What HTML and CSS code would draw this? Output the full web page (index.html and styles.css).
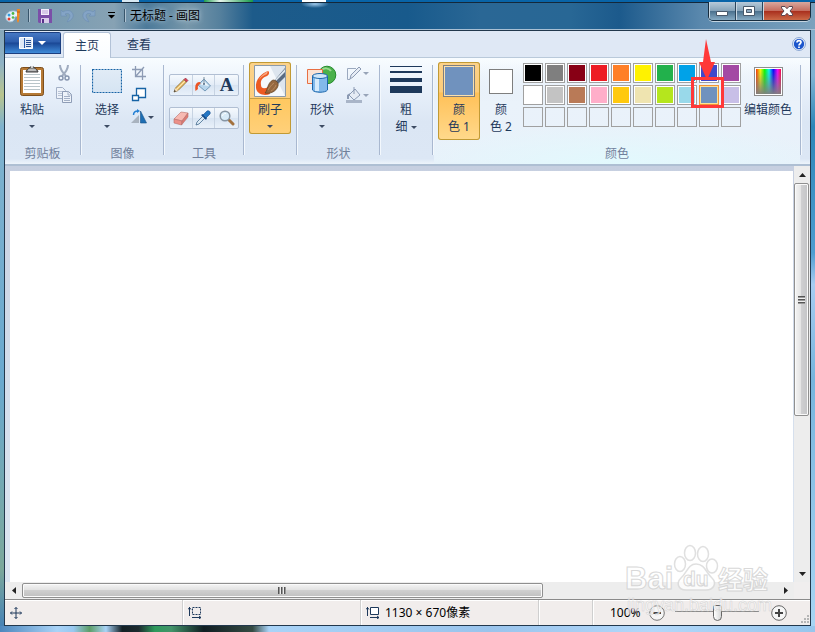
FILE: index.html
```html
<!DOCTYPE html>
<html lang="zh-CN">
<head>
<meta charset="utf-8">
<title>无标题 - 画图</title>
<link rel="stylesheet" href="styles.css">
</head>
<body>
<header class="titlebar">
  <svg class="app-icon" width="16" height="16" viewBox="0 0 16 16"><path d="M1 10C0 6 4 3 8 3c4 0 6 2 5 5-1 1-2 0-3 1s0 3-2 4c-3 2-7 0-7-3z" fill="#e8f2fa" stroke="#a9c8de"/><circle cx="4" cy="7" r="1.500" fill="#2e9be0"/><circle cx="8" cy="5.500" r="1.400" fill="#4cb748"/><circle cx="4" cy="11" r="1.500" fill="#e23b2e"/><circle cx="8" cy="9.500" r="1.300" fill="#57b947"/><path d="M12 1h3l-1 12-1 2-1-2z" fill="#f08a24"/><path d="M12 4h3" stroke="#b85c10"/></svg>
  <span class="divider"></span>
  <button class="quick" aria-label="保存"><svg width="14" height="14" viewBox="0 0 14 14"><path d="M0 0h14v14H1L0 13z" fill="#7b4fa8"/><path d="M3 0h8v6H3z" fill="#f3eefb"/><path d="M4 2h6M4 4h6" stroke="#b9a3d6"/><path d="M3 9h8v5H3z" fill="#d9cdea"/><path d="M4 10h2v4H4z" fill="#57318a"/></svg></button>
  <button class="quick" aria-label="撤消"><svg width="14" height="14" viewBox="0 0 14 14"><path d="M1 1v6h6L5 5c3-1.500 6 0 4.500 3.500L7 13c6-2 7.500-6.500 5-9.500C10 1 6 1 3 3z" fill="#84a4c6" stroke="#6b8db4" stroke-width=".6"/></svg></button>
  <button class="quick" aria-label="重做"><svg width="14" height="14" viewBox="0 0 14 14"><path d="M13 1v6H7l2-2C6 3.500 3 5 4.500 8.500L7 13C1 11-.5 6.500 2 3.500 4 1 8 1 11 3z" fill="#84a4c6" stroke="#6b8db4" stroke-width=".6"/></svg></button>
  <button class="quick more" aria-label="自定义快速访问工具栏"><svg width="9" height="7" viewBox="0 0 9 7"><path d="M1 0h7v1H1zM1 3h7L4.500 6.500z" fill="#000"/></svg></button>
  <span class="divider"></span>
  <h1 class="title">无标题 - 画图</h1>
  <div class="window-buttons">
    <button class="win" aria-label="最小化"><svg width="14" height="12" viewBox="0 0 14 12"><path d="M1.500 6.500h11v4h-11z" fill="#fff" stroke="#49596b"/></svg></button>
    <button class="win" aria-label="最大化"><svg width="14" height="12" viewBox="0 0 14 12"><path d="M1.500 1.500h11v9h-11z" fill="#fff" stroke="#49596b"/><path d="M4.500 4.500h5v3h-5z" fill="#8ea9c0" stroke="#49596b"/></svg></button>
    <button class="win close" aria-label="关闭"><svg width="14" height="12" viewBox="0 0 14 12"><path d="M1.500 1.500h3.500l2 2.200 2-2.200h3.500v1.500L10 6l2.500 3v1.500H9l-2-2.200-2 2.200H1.500V9L4 6 1.500 3z" fill="#fff" stroke="#5a4650"/></svg></button>
  </div>
</header>
<main class="window">
  <nav class="tabs">
    <button class="file" aria-label="画图菜单"><svg width="28" height="12" viewBox="0 0 28 12"><path d="M.5.500h13v11H.500z" fill="#dfe9f7" stroke="#fff"/><path d="M5.500 1v10" stroke="#2b5ba8"/><path d="M7 3.500h5M7 5.500h5M7 7.500h5M7 9.500h5" stroke="#264f94"/><path d="M19 4h8l-4 4z" fill="#fff"/></svg></button>
    <button class="tab active">主页</button>
    <button class="tab">查看</button>
    <button class="help" aria-label="帮助"><svg width="14" height="14" viewBox="0 0 14 14"><circle cx="7" cy="7" r="6.400" fill="#fff" stroke="#7f9fd0"/><circle cx="7" cy="7" r="5.200" fill="#1c56cc"/><path d="M5 5.500C5 3 9 3 9 5.300 9 6.800 7 6.700 7 8.500M7 9.600v1.500" fill="none" stroke="#fff" stroke-width="1.700"/></svg></button>
  </nav>
  <div class="ribbon">
    <section class="group clip">
      <div class="tools">
        <button class="big"><span class="pic"><svg width="30" height="32" viewBox="0 0 30 32"><rect x="3.500" y="2.500" width="23" height="28" rx="2" fill="#b67a35" stroke="#7e4f1c"/><path d="M6 5h18v23H6z" fill="#fff"/><path d="M7 9.500h16M7 12.500h16M7 15.500h16M7 18.500h16M7 21.500h16M7 24.500h16" stroke="#b9c5c9"/><path d="M9 7c0-3 3-2 4-5h4c1 3 4 2 4 5z" fill="#888" stroke="#3f3f3f"/><path d="M11 5h8" stroke="#eee"/><circle cx="15" cy="2" r="1" fill="#eee"/></svg></span><span>粘贴</span><i class="caret"></i></button>
        <div class="small-col">
          <button class="small" aria-label="剪切"><svg width="16" height="16" viewBox="0 0 16 16"><path d="M4 0c0 4 2 7 6 11M12 0c0 4-2 7-6 11" fill="none" stroke="#a0acbf" stroke-width="2"/><circle cx="5" cy="13" r="2" fill="none" stroke="#8594ae" stroke-width="1.400"/><circle cx="11" cy="13" r="2" fill="none" stroke="#8594ae" stroke-width="1.400"/></svg></button>
          <button class="small" aria-label="复制"><svg width="16" height="16" viewBox="0 0 16 16"><path d="M.5.500h6l3 3v8h-9z" fill="#eef3fa" stroke="#a3b0c6"/><path d="M2 4.500h5M2 6.500h5M2 8.500h5" stroke="#b9c4d6"/><path d="M6.500 4.500h6l3 3v8h-9z" fill="#eef3fa" stroke="#8f9db6"/><path d="M12 4v4h4M8 9.500h6M8 11.500h6M8 13.500h6" fill="none" stroke="#a3b0c6"/></svg></button>
        </div>
      </div>
      <h2>剪贴板</h2>
    </section>
    <i class="sep"></i>
    <section class="group image">
      <div class="tools">
        <button class="big"><span class="pic"><svg width="30" height="26" viewBox="0 0 30 26"><path d="M.5 1.500h29v23H.500z" fill="#1763a514" stroke="#1763a5" stroke-width="1.200" stroke-dasharray="2 1"/></svg></span><span>选择</span><i class="caret"></i></button>
        <div class="small-col">
          <button class="small" aria-label="裁剪"><svg width="16" height="16" viewBox="0 0 16 16"><path d="M4.500 1v10.500H15M1 4.500h10.500V15M5 11l8-9" fill="none" stroke="#8d9bb4" stroke-width="1.300"/></svg></button>
          <button class="small" aria-label="重新调整大小"><svg width="16" height="16" viewBox="0 0 16 16"><path d="M5.500 1.500h9v9h-9z" fill="#fff" stroke="#1763a5" stroke-width="1.300"/><path d="M1.500 8.500h6v5h-6z" fill="#fff" stroke="#1763a5" stroke-width="1.300"/></svg></button>
          <button class="small wide" aria-label="旋转"><svg width="16" height="16" viewBox="0 0 16 16"><path d="M8 6v8H0z" fill="#a9b3bf"/><path d="M9.500 2v12h6z" fill="#1e6eb3" stroke="#145188" stroke-width=".6"/><path d="M2.500 6c0-3 1.500-4 4.500-4" fill="none" stroke="#2480d4" stroke-width="1.500"/><path d="M6 0l3 2-3 2z" fill="#2480d4"/></svg><i class="caret"></i></button>
        </div>
      </div>
      <h2>图像</h2>
    </section>
    <i class="sep"></i>
    <section class="group kit">
      <div class="tools">
        <div class="strip">
          <button aria-label="铅笔"><svg width="16" height="16" viewBox="0 0 16 16"><path d="M1 15l1.500-4 8.500-8.500 2.500 2.500L5 13.500z" fill="#f2c870" stroke="#7c5a20" stroke-width=".8"/><path d="M4 12l8-8" stroke="#fbe6b4"/><path d="M1 15l1.500-4L5 13.500z" fill="#f5dfbd"/><path d="M1 15l.6-2L3 14.300z" fill="#222"/><path d="M11 2.500L12.500 1 15 3.500 13.500 5z" fill="#d9435a" stroke="#8c2c3a" stroke-width=".6"/></svg></button>
          <button aria-label="用颜色填充"><svg width="16" height="16" viewBox="0 0 16 16"><path d="M3 8l6-6 6.500 7L10 14z" fill="#b7d5ec" stroke="#5f89a9" stroke-width=".8"/><path d="M5.500 7.500L9 4l5 5z" fill="#eff7fc"/><path d="M9 0v7" stroke="#7c8f9f"/><circle cx="9" cy="7" r="1" fill="#58718a"/><path d="M5 5C1 5-.5 8 .5 14l2.500-2c-.5-3 0-4 2.500-5z" fill="#ec5423"/></svg></button>
          <button class="letter" aria-label="文本">A</button>
        </div>
        <div class="strip">
          <button aria-label="橡皮擦"><svg width="16" height="16" viewBox="0 0 16 16"><path d="M1 9l7-7 7 1-6 8z" fill="#f7b9b2" stroke="#b9716c" stroke-width=".6"/><path d="M1 9l8 2-.5 4L1 13z" fill="#ec9088" stroke="#b9716c" stroke-width=".6"/><path d="M9 11l6-8v4l-6.500 8z" fill="#dc7a73" stroke="#b9716c" stroke-width=".6"/></svg></button>
          <button aria-label="颜色选取器"><svg width="16" height="16" viewBox="0 0 16 16"><path d="M1 15l1-3 6-6 2 2-6 6z" fill="#dceaf5" stroke="#456c8f" stroke-width=".8"/><path d="M6 5l2-1 4 4-1 2z" fill="#174d8c"/><path d="M8 5l4-4c2-1 4 1 3 3l-4 4z" fill="#2577c4" stroke="#174d8c" stroke-width=".6"/></svg></button>
          <button aria-label="放大镜"><svg width="16" height="16" viewBox="0 0 16 16"><path d="M10 10l4 4" stroke="#a3713d" stroke-width="3" stroke-linecap="round"/><circle cx="6" cy="6" r="4.800" fill="#d8ebf8" stroke="#8795a3" stroke-width="1.500"/><path d="M3.500 6C4 4 5 3.500 7 3.500" fill="none" stroke="#fff"/></svg></button>
        </div>
      </div>
      <h2>工具</h2>
    </section>
    <i class="sep"></i>
    <section class="group brush">
      <div class="tools">
        <button class="big on split"><span class="pic"><svg width="32" height="32" viewBox="0 0 32 32"><path d="M.5.500h31v31H.500z" fill="#f5f8fb" stroke="#8c9aa8"/><path d="M31 31L16 1h15z" fill="#dde5ee"/><path d="M31 3L20 16l4 3 7-7z" fill="#5b6c82"/><path d="M31 4L21 15l1 1 9-9z" fill="#dfe8f0"/><path d="M14 6C8 8 1 14 2 23c1 7 9 8 14 6l-2-7c-3 2-7 2-7-2C6 14 10 12 13 11c2-1 3-4 1-5z" fill="#ec5a22"/><path d="M14 6c-3 2-7 4-9 9 3-4 6-5 8-6z" fill="#f8a57f"/><path d="M11 28c3-3 2-10 8-13 3 0 6 3 5 6-2 6-8 8-13 7z" fill="#96683f" stroke="#60401f" stroke-width=".7"/><path d="M14 25c2-3 3-5 6-7M17 26c2-1 4-3 5-6" fill="none" stroke="#c09469" stroke-width=".8"/></svg></span><span>刷子</span><i class="caret"></i></button>
      </div>
    </section>
    <i class="sep"></i>
    <section class="group shapes">
      <div class="tools">
        <button class="big"><span class="pic"><svg width="32" height="32" viewBox="0 0 32 32"><circle cx="21" cy="10" r="8.800" fill="#4bb14b" stroke="#258a2d"/><path d="M15 6c3-4 8-3 10 0" fill="none" stroke="#9ad88e" stroke-width="2"/><path d="M1.500 4.500h15v14h-15z" fill="#fbe3d5" stroke="#e86f43"/><path d="M6.500 11v14c2 3 13 3 15 0V11z" fill="#83b9ea" stroke="#1c67ac"/><path d="M9 12h4v14H9z" fill="#d6ebfc"/><ellipse cx="14" cy="11" rx="7.500" ry="2.500" fill="#cfe6f9" stroke="#1c67ac"/></svg></span><span>形状</span><i class="caret"></i></button>
        <div class="small-col">
          <button class="small wide" aria-label="形状轮廓"><svg width="16" height="16" viewBox="0 0 16 16"><path d="M10 3.500H1.500v11H4" fill="none" stroke="#9ba9bf"/><path d="M4 14l1-4 8-8 2 2-8 8z" fill="#e6ecf5" stroke="#8b9ab3"/></svg><i class="caret dim"></i></button>
          <button class="small wide" aria-label="形状填充"><svg width="16" height="16" viewBox="0 0 16 16"><path d="M0 13h16v3H0z" fill="#a9b5c8"/><path d="M3 8l6-6 5 6-6 5z" fill="#e6ecf5" stroke="#8b9ab3"/><path d="M8 0v7" stroke="#8b9ab3"/><path d="M4 6L1 8v4h2V9z" fill="#8b9ab3"/></svg><i class="caret dim"></i></button>
        </div>
      </div>
      <h2>形状</h2>
    </section>
    <i class="sep"></i>
    <section class="group size">
      <div class="tools">
        <button class="big"><span class="pic"><svg width="32" height="32" viewBox="0 0 32 32"><path d="M0 1h32v1H0zM0 6h32v2H0zM0 13h32v4H0zM0 21h32v7H0z" fill="#1e395b"/></svg></span><span>粗<br>细 <i class="caret"></i></span></button>
      </div>
    </section>
    <i class="sep"></i>
    <section class="group colors">
      <div class="tools">
        <button class="big on"><span class="pic"><i class="current first"></i></span><span>颜<br>色 1</span></button>
        <button class="big"><span class="pic"><i class="current second"></i></span><span>颜<br>色 2</span></button>
        <div class="palette">
          <button class="swatch black" aria-label="黑色"></button>
          <button class="swatch gray" aria-label="灰色"></button>
          <button class="swatch darkred" aria-label="深红色"></button>
          <button class="swatch red" aria-label="红色"></button>
          <button class="swatch orange" aria-label="橙色"></button>
          <button class="swatch yellow" aria-label="黄色"></button>
          <button class="swatch green" aria-label="绿色"></button>
          <button class="swatch turquoise" aria-label="青绿色"></button>
          <button class="swatch indigo" aria-label="靛蓝色"></button>
          <button class="swatch purple" aria-label="紫色"></button>
          <button class="swatch white" aria-label="白色"></button>
          <button class="swatch silver" aria-label="浅灰色"></button>
          <button class="swatch brown" aria-label="褐色"></button>
          <button class="swatch rose" aria-label="玫瑰色"></button>
          <button class="swatch gold" aria-label="金色"></button>
          <button class="swatch tan" aria-label="浅黄色"></button>
          <button class="swatch lime" aria-label="酸橙色"></button>
          <button class="swatch aqua" aria-label="淡青绿色"></button>
          <div class="marked">
            <button class="swatch bluegray selected" aria-label="蓝灰色"></button>
            <svg class="pointer" width="33" height="69" viewBox="0 0 33 69"><path d="M15 0l5 23h4l-8 18L8 23h4z" fill="#ff3838"/><path d="M1.500 39.500h30v28h-30z" fill="none" stroke="#ff3838" stroke-width="3"/></svg>
          </div>
          <button class="swatch lavender" aria-label="淡紫色"></button>
          <button class="swatch" aria-label="自定义 1"></button>
          <button class="swatch" aria-label="自定义 2"></button>
          <button class="swatch" aria-label="自定义 3"></button>
          <button class="swatch" aria-label="自定义 4"></button>
          <button class="swatch" aria-label="自定义 5"></button>
          <button class="swatch" aria-label="自定义 6"></button>
          <button class="swatch" aria-label="自定义 7"></button>
          <button class="swatch" aria-label="自定义 8"></button>
          <button class="swatch" aria-label="自定义 9"></button>
          <button class="swatch" aria-label="自定义 10"></button>
        </div>
        <button class="big edit"><span class="pic"><i class="spectrum"></i></span><span>编辑颜色</span></button>
      </div>
      <h2>颜色</h2>
    </section>
    <i class="sep"></i>
  </div>
  <div class="workspace">
    <div class="desk"><div class="canvas"></div></div>
    <div class="scroll vertical">
      <button class="arrow" aria-label="向上滚动"><svg width="7" height="4" viewBox="0 0 7 4"><path d="M0 4h7L3.500 0z" fill="#222"/></svg></button>
      <div class="track"><div class="thumb"><i class="grip"></i></div></div>
      <button class="arrow" aria-label="向下滚动"><svg width="7" height="4" viewBox="0 0 7 4"><path d="M0 0h7L3.500 4z" fill="#222"/></svg></button>
    </div>
    <div class="scroll horizontal">
      <button class="arrow" aria-label="向左滚动"><svg width="4" height="7" viewBox="0 0 4 7"><path d="M4 0v7L0 3.500z" fill="#222"/></svg></button>
      <div class="track"><div class="thumb"><i class="grip"></i></div></div>
      <button class="arrow" aria-label="向右滚动"><svg width="4" height="7" viewBox="0 0 4 7"><path d="M0 0v7l4-3.500z" fill="#222"/></svg></button>
    </div>
    <div class="corner"></div>
  </div>
  <footer class="status">
    <div class="cell"><svg width="12" height="12" viewBox="0 0 12 12"><path d="M6 .5v11M.5 6h11M4.500 2L6 .5 7.500 2M4.500 10L6 11.500 7.500 10M2 4.500L.5 6 2 7.500M10 4.500L11.500 6 10 7.500" fill="none" stroke="#1e395b"/></svg></div>
    <div class="cell"><svg width="14" height="12" viewBox="0 0 14 12"><path d="M1.500 0v9M0 2.500L1.500.5 3 2.500M4 10.500h9M11 9l2 1.500-2 1.500" fill="none" stroke="#1e395b"/><path d="M4.500.500h8v7h-8z" fill="none" stroke="#1e395b" stroke-dasharray="2 1"/></svg></div>
    <div class="cell"><svg width="14" height="12" viewBox="0 0 14 12"><path d="M1.500 0v9M0 2.500L1.500.5 3 2.500M4 10.500h9M11 9l2 1.500-2 1.500" fill="none" stroke="#1e395b"/><path d="M4.500.500h8v7h-8z" fill="#fff" stroke="#1e395b"/></svg><span>1130 × 670像素</span></div>
    <div class="cell short"></div>
    <div class="zoom">
      <label for="zoom">100%</label>
      <button class="round" aria-label="缩小"><svg width="16" height="16" viewBox="0 0 16 16"><circle cx="8" cy="8" r="7.300" fill="#f6f6f6" stroke="#777"/><path d="M4 7h8v2H4z" fill="#444"/></svg></button>
      <input id="zoom" type="range" min="0" max="100" value="50">
      <button class="round" aria-label="放大"><svg width="16" height="16" viewBox="0 0 16 16"><circle cx="8" cy="8" r="7.300" fill="#f6f6f6" stroke="#666"/><path d="M4 7h3V4h2v3h3v2H9v3H7V9H4z" fill="#444"/></svg></button>
      <svg class="resize" width="9" height="9" viewBox="0 0 9 9"><path d="M7 1h2v2H7zM4 4h2v2H4zM7 4h2v2H7zM1 7h2v2H1zM4 7h2v2H4zM7 7h2v2H7z" fill="#b5b5b5"/></svg>
    </div>
  </footer>
</main>
<svg class="watermark" width="150" height="72" viewBox="0 0 150 72">
  <g fill="#fff" stroke="#d9d9d9" stroke-width="1.500">
    <ellipse cx="54" cy="20" rx="5.500" ry="7.500"/><ellipse cx="64" cy="9" rx="5.500" ry="7.500"/><ellipse cx="77" cy="10" rx="5.500" ry="7.500"/><ellipse cx="86" cy="22" rx="5.500" ry="7"/>
    <path d="M70 20c9 0 10 9 16 14 5 5 2 12-6 12H60c-8 0-10-7-5-12 6-5 7-14 15-14z"/>
  </g>
  <g class="mark">
    <text x="-1" y="45" font-size="31">Bai</text>
    <text x="57" y="42" font-size="21">du</text>
    <text x="92" y="45" font-size="25">经验</text>
    <text class="site" x="1" y="67" font-size="18">jingyan.baidu.com</text>
  </g>
</svg>
</body>
</html>
```
FILE: styles.css
```css
* { box-sizing: border-box; }
body {
  margin: 0;
  height: 100vh;
  padding: 0 4px 6px;
  display: flex;
  flex-direction: column;
  position: relative;
  font: 12px/17px "Noto Sans", "Noto Sans CJK SC", sans-serif;
  color: #1e395b;
  background:
    linear-gradient(90deg, #4d87bd 0, #a9d3f7 7%, #98c8f0 9%, #5d9e68 11%, #a9d3f7 13%, #132025 15%, #1d2a2e 17%, #2e9a5c 19%, #43946a 21%, #101d22 25%, #354b43 31%, #a9d3f7 33%, #9ac4ec 60%, #b2d8fa 80%, #97c6ec) bottom / 100% 6px no-repeat,
    linear-gradient(#86aac4 0, #7fb3d3 12%, #2d86b8 20%, #4e9dd0 40%, #a7cdf2 45%, #76b5dd 60%, #a9d6f4 100%) right / 4px 100% no-repeat,
    linear-gradient(#7e9cae 0, #8fb3c6 10%, #b9c58e 15%, #7fb2ce 20%, #6aa9cf 60%, #7ca89b 90%, #427fb8 100%) left / 4px 100% no-repeat;
}
button { margin: 0; padding: 0; border: 0; background: none; font: inherit; color: inherit; }
button, svg { flex: none; }
svg { display: block; }
h1, h2 { margin: 0; font: inherit; }

.titlebar {
  height: 30px;
  flex: none;
  margin: 0 -4px;
  padding: 2px 4px 0;
  display: flex;
  align-items: center;
  border-bottom: 1px solid #a9c0d4;
  background:
    linear-gradient(90deg, #0864a8 15%, #d8e9f3 15%, #d8e9f3 17%, #0864a8 17%, #0864a8 25%, #1a9b4b 25%, #e8f5ed 27%, #1a9b4b 31%, #0864a8 31%, #0864a8 37%, #fff 37%, #fff 40%, #0864a8 40%) top / 100% 2px no-repeat,
    linear-gradient(#14283a, #14283a) 0 2px / 100% 1px no-repeat,
    radial-gradient(14px 4px at 315px 4px, #9cc6e8, #8bb8dc00),
    linear-gradient(90deg, #7895a8 0, #7c9db2 8%, #87a2b4 14%, #4c7a9a 18%, #7797aa 23%, #55809d 27%, #1d5b8a 31%, #185a8c 50%, #2a6795 59%, #286795 70%, #1c5a8c 76%, #5a88ad 86%, #7aa1bd);
}
.app-icon { margin-left: 1px; }
.divider { width: 2px; height: 13px; margin-left: 7px; border-left: 1px solid #38556b; border-right: 1px solid #b0c4d3; }
.quick { width: 14px; margin-left: 8px; }
.more { display: flex; justify-content: center; }
.titlebar .more + .divider { margin-left: 6px; }
.title { margin-left: 4px; color: #000; text-shadow: 0 0 5px #dce9f2; }
.window-buttons { margin: 0 0 0 auto; align-self: flex-start; display: flex; height: 19px; border: 1px solid #172c3e; border-top: 0; border-radius: 0 0 5px 5px; overflow: hidden; box-shadow: 0 1px #c3d4e0; }
.win { width: 27px; display: flex; align-items: center; justify-content: center; border-right: 1px solid #2d465b; background: linear-gradient(#b7cad9, #87a4ba 48%, #496f8c 50%, #87abc4); box-shadow: inset 1px 0 #cad8e3; }
.close { width: 47px; border: 0; background: linear-gradient(#d9a89e, #c56e60 48%, #a82e1d 50%, #cb6947); }

.window { flex: 1; min-height: 0; display: flex; flex-direction: column; border: 1px solid #22384d; }
.tabs { height: 27px; flex: none; display: flex; align-items: flex-end; background: #dfe8f5; border-bottom: 1px solid #b9c9da; }
.file { width: 56px; height: 22px; align-self: flex-start; margin-top: 1px; display: flex; align-items: center; justify-content: center; border: 1px solid #1c3f80; border-left: 0; border-radius: 0 2px 0 0; background: linear-gradient(#4779c4, #2c5cab 45%, #1a4795 50%, #3f8bd9); }
.tab { width: 48px; height: 25px; margin-left: 4px; }
.file + .tab { margin-left: 2px; }
.active { margin-bottom: -1px; height: 26px; border: 1px solid #b3c2d7; border-bottom: 0; border-radius: 3px 3px 0 0; background: linear-gradient(#fff, #f9fcff); }
.help { margin: 0 4px 6px auto; }

.ribbon { height: 108px; flex: none; display: flex; padding-top: 4px; border-bottom: 2px solid #aebfd3; background: linear-gradient(#f8fcff 0, #e8f0fa 30%, #dbe6f4 60%, #dce7f5 95%, #edf4fb 100%); }
.group { display: flex; flex-direction: column; align-items: center; padding-bottom: 2px; flex: none; }
.group h2 { margin-top: auto; color: #70809b; }
.sep { flex: none; width: 2px; margin: 3px 0 9px; border-left: 1px solid #a9b8d0; border-right: 1px solid #f3f8fd; }
.tools { align-self: stretch; display: flex; align-items: flex-start; }
.clip { width: 75px; }
.clip .tools { padding-left: 6px; }
.image { width: 81px; }
.image .tools { padding-left: 4px; }
.kit { width: 78px; }
.kit .tools { flex-direction: column; align-items: center; padding-top: 12px; gap: 11px; }
.brush { width: 51px; }
.brush .tools { padding-left: 4px; }
.size { width: 51px; }
.size .tools { padding-left: 4px; }
.shapes { width: 81px; }
.shapes .tools { padding-left: 3px; }
.colors { width: 366px; background: radial-gradient(ellipse 60% 40% at 50% 100%, #e2f9fd, #e6f4fb00), linear-gradient(#f8fcff00, #eaf2fa 40%, #e8f1fa); }
.colors .tools { padding-left: 4px; }

.big { width: 42px; padding: 3px 0 5px; display: flex; flex-direction: column; align-items: center; border-radius: 3px; }
.pic { width: 32px; height: 32px; margin-bottom: 4px; display: flex; align-items: center; justify-content: center; }
.caret { display: inline-block; border: 3px solid transparent; border-top-color: #3d4b63; border-bottom: 0; }
.big > .caret { margin: 7px 0 6px; }
.big span > .caret { vertical-align: 2px; }
.caret.dim { border-top-color: #97a4b8; }
.on { background: linear-gradient(#fbd28a, #fdcd7a 38%, #ffc158 40%, #ffd98c); box-shadow: inset 0 0 0 1px #c19a35; }
.split { padding-bottom: 0; background: linear-gradient(#fbd28a, #fdcf80 36px, #c8a045 36px, #c8a045 37px, #ffc860 37px, #ffd07a); }
.small-col { display: flex; flex-direction: column; gap: 6px; padding: 3px 0 0 3px; }
.small { width: 16px; height: 16px; }
.wide { width: 24px; display: flex; align-items: center; gap: 1px; }
.strip { width: 70px; height: 22px; display: grid; grid-template-columns: repeat(3, 1fr); border: 1px solid #b1bfd3; border-radius: 2px; background: linear-gradient(#f5f9fd, #e3ecf7 50%, #d8e4f2 52%, #e9f1fa); }
.strip button { display: flex; align-items: center; justify-content: center; border-right: 1px solid #c7d3e2; }
.strip button:last-child { border-right: 0; }
.strip .letter { font: bold 19px/20px "Liberation Serif", serif; }

.current { width: 32px; height: 32px; border: 1px solid #7e7e7e; }
.first { background: #7092be; box-shadow: inset 0 0 0 1px #fbe0ae; }
.second { width: 24px; height: 25px; background: #fff; }
.palette { display: grid; grid-template-columns: repeat(10, 20px); grid-auto-rows: 20px; gap: 2px; padding: 1px 0 0 1px; }
.swatch { width: 20px; height: 20px; border: 1px solid #a0a0a0; padding: 1px; background-clip: content-box; }
.black { background-color: #000; }
.gray { background-color: #7f7f7f; }
.darkred { background-color: #880015; }
.red { background-color: #ed1c24; }
.orange { background-color: #ff7f27; }
.yellow { background-color: #fff200; }
.green { background-color: #22b14c; }
.turquoise { background-color: #00a2e8; }
.indigo { background-color: #3f48cc; }
.purple { background-color: #a349a4; }
.white { background-color: #fff; }
.silver { background-color: #c3c3c3; }
.brown { background-color: #b97a57; }
.rose { background-color: #ffaec9; }
.gold { background-color: #ffc90e; }
.tan { background-color: #efe4b0; }
.lime { background-color: #b5e61d; }
.aqua { background-color: #99d9ea; }
.bluegray { background-color: #7092be; }
.lavender { background-color: #c8bfe7; }
.swatch[class*=" "] { box-shadow: inset 0 0 0 1px #fff; }
.palette .selected { border-color: #f29436; box-shadow: inset 0 0 0 1px #ffe294; }
.marked { position: relative; }
.pointer { position: absolute; left: -8px; top: -46px; z-index: 1; pointer-events: none; }
.edit { width: 50px; margin-left: 2px; }
.spectrum { width: 29px; height: 29px; border: 1px solid #8d8d8d; outline: 1px solid #fff; outline-offset: -2px; background: linear-gradient(#80808000, #808080), linear-gradient(90deg, #f00, #ff0 20%, #0f0 36%, #0ff 52%, #00f 68%, #f0f 84%, #f00); }

.workspace { flex: 1; min-height: 0; display: grid; grid-template: 1fr 17px / 1fr 16px; }
.desk { padding: 5px 1px 0 5px; background: linear-gradient(#c6cfe0, #d3ddeb 50%, #dde6f2); }
.canvas { height: 100%; background: #fff; }
.scroll { display: flex; background: #ededed; }
.vertical { flex-direction: column; }
.arrow { width: 17px; height: 17px; display: flex; align-items: center; justify-content: center; }
.vertical .arrow { width: 16px; }
.track { flex: 1; min-width: 0; min-height: 0; }
.thumb { display: flex; align-items: center; justify-content: center; border: 1px solid #8f8f8f; border-radius: 2px; box-shadow: inset 0 0 0 1px #fafafa; }
.vertical .thumb { height: 61%; margin-right: 1px; background: linear-gradient(90deg, #f4f4f4, #e4e4e4 45%, #cfcfd1 50%, #c3c4c6); }
.horizontal .thumb { width: 69%; height: 15px; margin-top: 1px; background: linear-gradient(#f4f4f4, #e2e2e2 45%, #cfcfcf 50%, #bfbfbf); }
.grip { width: 8px; height: 7px; background: repeating-linear-gradient(90deg, #555 0 1px, #999 1px 2px, #eee 2px 3px); }
.vertical .grip { width: 7px; height: 8px; background: repeating-linear-gradient(#555 0 1px, #999 1px 2px, #eee 2px 3px); }
.corner { background: #f0eeee; }

.status { height: 26px; flex: none; display: flex; border-top: 1px solid #8a8a8a; background: #f1edec; box-shadow: inset 0 1px #fff; color: #000; }
.cell { flex: 178; min-width: 0; padding: 0 5px; display: flex; align-items: center; gap: 5px; border-right: 1px solid #cfcfcf; box-shadow: 1px 0 #fff; white-space: nowrap; }
.short { flex: 0 0 54px; }
.zoom { flex: 0 0 217px; padding-left: 17px; display: flex; align-items: center; position: relative; }
.zoom label { width: 39px; }
.round { width: 16px; height: 16px; }
#zoom { -webkit-appearance: none; appearance: none; width: 84px; height: 18px; margin: 0 12px 0 10px; background: linear-gradient(#8b8b8b, #8b8b8b) 0 7px / 100% 1px no-repeat; }
#zoom::-webkit-slider-thumb { -webkit-appearance: none; width: 9px; height: 16px; border: 1px solid #666; border-radius: 2px 2px 5px 5px; background: linear-gradient(90deg, #fff, #d7d7d7); }
.resize { position: absolute; right: 1px; bottom: 2px; }

.watermark { position: absolute; right: 39px; bottom: 16px; opacity: .8; pointer-events: none; }
.mark { font-family: "Liberation Sans", "Noto Sans CJK SC", sans-serif; font-weight: bold; fill: #fff; stroke: #d0d0d0; stroke-width: 1; }
.mark .site { font-weight: normal; stroke-width: .6; }
```
